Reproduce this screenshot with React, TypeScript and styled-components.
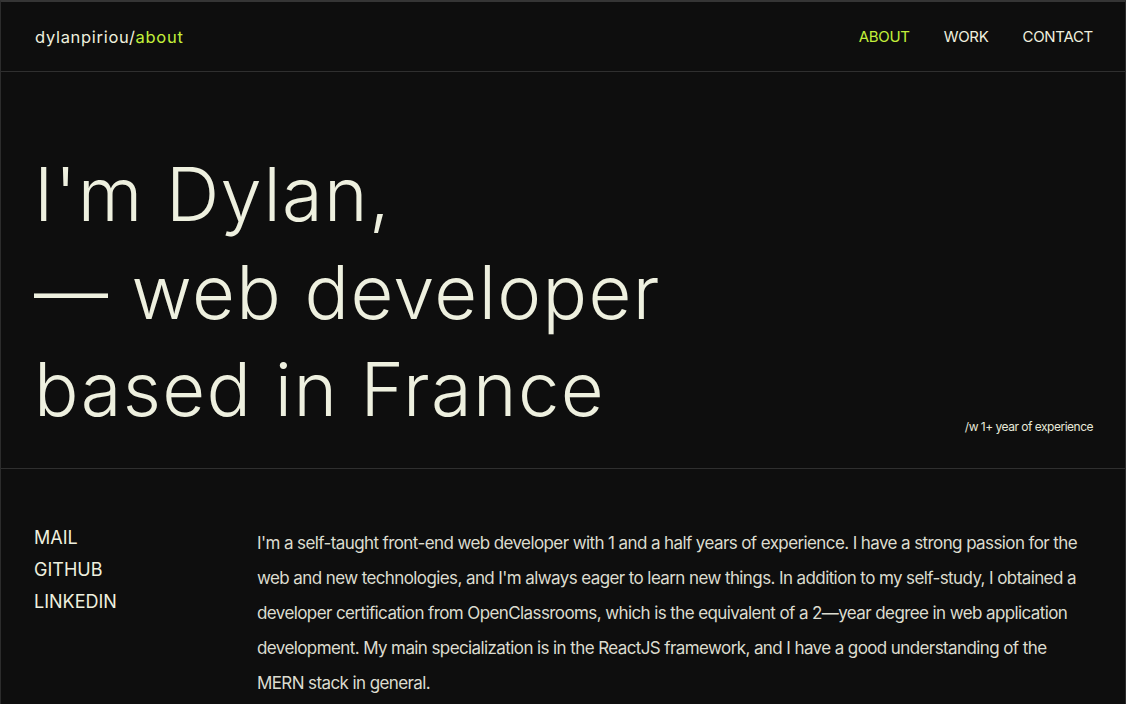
import React from "react";
import styled, { createGlobalStyle } from "styled-components";

const Global = createGlobalStyle`
  html, body { margin: 0; padding: 0; background: #0e0e0e; }
  body { font-family: Inter, "Noto Sans", sans-serif; color: #eef0df; }
  * { box-sizing: border-box; }
`;

const Page = styled.div`
  width: 1126px;
  height: 704px;
  overflow: hidden;
  background: #0e0e0e;
  border-top: 2px solid #353535;
  border-left: 1px solid #2c2c2c;
  border-right: 1px solid #2c2c2c;
`;

const Header = styled.header`
  height: 70px;
  display: flex;
  align-items: center;
  justify-content: space-between;
  padding: 0 32px 0 34px;
  border-bottom: 1px solid #2f2f2f;
`;

const Brand = styled.div`
  font-size: 16.5px;
  letter-spacing: 0.7px;
  font-weight: 400;
  color: #eef0df;
`;

const Accent = styled.span`
  color: #c3f03a;
`;

const Nav = styled.nav`
  display: flex;
  gap: 34px;
`;

const NavLink = styled.a<{ $active?: boolean }>`
  font-size: 15px;
  letter-spacing: -0.3px;
  color: ${(p) => (p.$active ? "#c3f03a" : "#eef0df")};
  text-decoration: none;
`;

const Hero = styled.section`
  display: flex;
  justify-content: space-between;
  align-items: flex-end;
  padding: 74px 32px 29px 33px;
  border-bottom: 1px solid #2f2f2f;
`;

const Title = styled.h1`
  margin: 0;
  font-size: 74px;
  line-height: 97.5px;
  font-weight: 300;
  letter-spacing: 1.4px;
  color: #eef0df;
`;

const Experience = styled.div`
  font-size: 12px;
  letter-spacing: -0.5px;
  color: #e6e8d8;
  margin-bottom: 5px;
`;

const About = styled.section`
  display: grid;
  grid-template-columns: 223px 1fr;
  padding: 53px 20px 0 33px;
`;

const Links = styled.ul`
  list-style: none;
  margin: 0;
  padding: 0;
  display: flex;
  flex-direction: column;
`;

const SocialLink = styled.li`
  font-size: 18px;
  line-height: 32px;
  letter-spacing: 0px;
  color: #eef0df;
`;

const Para = styled.p`
  margin: 4px 0 0;
  font-size: 17px;
  line-height: 35px;
  color: #dcdccf;
  letter-spacing: -0.6px;
  white-space: nowrap;
`;

const lines = [
  "I'm a self-taught front-end web developer with 1 and a half years of experience. I have a strong passion for the",
  "web and new technologies, and I'm always eager to learn new things. In addition to my self-study, I obtained a",
  "developer certification from OpenClassrooms, which is the equivalent of a 2—year degree in web application",
  "development. My main specialization is in the ReactJS framework, and I have a good understanding of the",
  "MERN stack in general.",
];

export default function App() {
  return (
    <Page>
      <Global />
      <Header>
        <Brand>
          dylanpiriou/<Accent>about</Accent>
        </Brand>
        <Nav>
          <NavLink $active>ABOUT</NavLink>
          <NavLink>WORK</NavLink>
          <NavLink>CONTACT</NavLink>
        </Nav>
      </Header>
      <Hero>
        <Title>
          I'm Dylan,
          <br />— web developer
          <br />
          based in France
        </Title>
        <Experience>/w 1+ year of experience</Experience>
      </Hero>
      <About>
        <Links>
          <SocialLink>MAIL</SocialLink>
          <SocialLink>GITHUB</SocialLink>
          <SocialLink>LINKEDIN</SocialLink>
        </Links>
        <Para>
          {lines.map((l, i) => (
            <React.Fragment key={i}>
              {l}
              {i < lines.length - 1 && <br />}
            </React.Fragment>
          ))}
        </Para>
      </About>
    </Page>
  );
}
